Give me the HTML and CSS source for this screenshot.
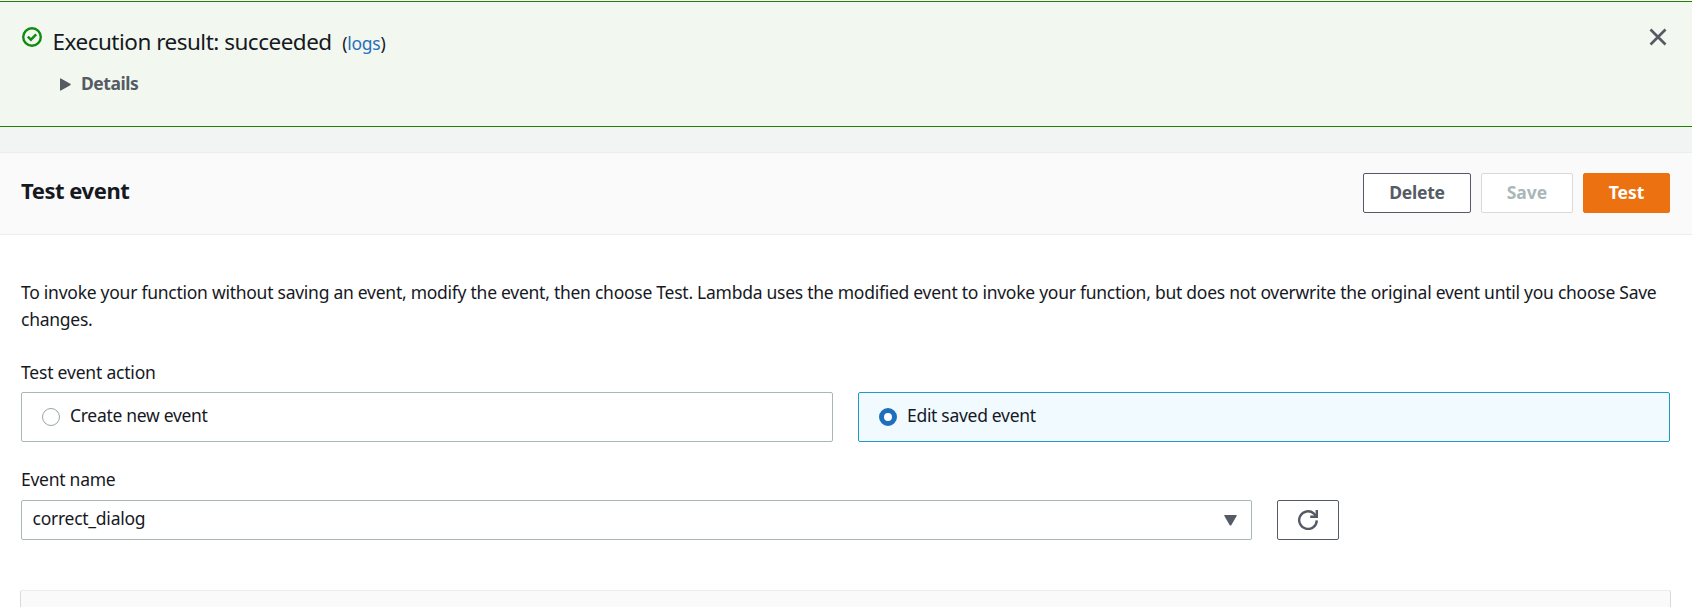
FILE: index.html
```html
<!DOCTYPE html>
<html lang="en">
<head>
<meta charset="utf-8">
<title>Test event</title>
<link rel="stylesheet" href="styles.css">
</head>
<body>
<section class="banner">
  <svg class="status-icon" viewBox="0 0 20 20"><circle cx="10" cy="10" r="8.8"/><path d="M5.8 9.7l3.1 3 5.3-5.3"/></svg>
  <div class="banner-body">
    <div class="banner-title"><span class="result">Execution result: succeeded</span><span class="logs">(<a>logs</a>)</span></div>
    <div class="details"><svg class="caret" viewBox="0 0 11 13"><path d="M0 .9q0-.9.9-.5l9.4 5.4q.8.7 0 1.4L.9 12.6q-.9.4-.9-.5z"/></svg><span>Details</span></div>
  </div>
  <svg class="close" viewBox="0 0 18 18"><path d="M1.5 1.5l15 15M16.5 1.5l-15 15"/></svg>
</section>
<main class="panel">
  <header class="panel-header">
    <h2>Test event</h2>
    <div class="actions">
      <button class="btn delete"><span>Delete</span></button>
      <button class="btn save"><span>Save</span></button>
      <button class="btn test"><span>Test</span></button>
    </div>
  </header>
  <div class="panel-body">
    <p class="intro"><span>To invoke your function without saving an event, modify the event, then choose Test. Lambda uses the modified event to invoke your function, but does not overwrite the original event until you choose Save</span><br><span>changes.</span></p>
    <div class="label label-action"><span>Test event action</span></div>
    <div class="tiles">
      <div class="tile"><i class="radio"></i><span>Create new event</span></div>
      <div class="tile selected"><i class="radio"></i><span>Edit saved event</span></div>
    </div>
    <div class="label label-name"><span>Event name</span></div>
    <div class="name-row">
      <div class="select"><span>correct_dialog</span><svg class="arrow" viewBox="0 0 13 11"><path d="M.9 0h11.2q1.1.1.5 1L7.4 9.9q-.9 1-1.8 0L.4 1q-.6-.9.5-1z"/></svg></div>
      <button class="refresh" aria-label="Refresh"><svg viewBox="0 0 20 20"><path d="M18.8 10.4A8.8 8.8 0 1 1 15.8 3.5L18 5.8"/><path d="M18.8 0v6.8h-6.6"/></svg></button>
    </div>
    <div class="editor"></div>
  </div>
</main>
</body>
</html>
```
FILE: styles.css
```css
* { box-sizing: border-box; }
html { overflow: hidden; }
body { margin: 0; padding-top: 1px; height: 607px; overflow: hidden; background: #fff; color: #16191f; font: 17.5px/27px "Noto Sans", "Open Sans", sans-serif; letter-spacing: -0.26px; }
svg { display: block; flex: none; }
span { white-space: nowrap; }

.banner { height: 126px; display: flex; align-items: flex-start; padding: 26px 25px 0 22px; background: #f2f8f0; border-top: 1px solid #1d8102; border-bottom: 1px solid #1d8102; }
.status-icon { width: 20px; height: 20px; fill: none; stroke: #108a10; stroke-width: 2.4; margin-top: -1px; }
.banner-body { flex: 1; padding-left: 10.5px; }
.banner-title { display: flex; align-items: baseline; gap: 10.5px; height: 28px; }
.result { font-size: 22.5px; line-height: 28px; letter-spacing: -0.5px; }
.logs a { color: #2a6ebb; }
.details { display: flex; align-items: center; margin-top: 15px; padding-left: 7.5px; color: #545b64; font-weight: 700; line-height: 28px; letter-spacing: -0.45px; }
.details span { margin-top: -2px; }
.caret { width: 11px; height: 13px; margin-right: 10px; fill: #545b64; }
.close { width: 18px; height: 18px; fill: none; stroke: #545b64; stroke-width: 2.7; }

.panel { border-top: 25px solid #f2f3f3; }
.panel-header { height: 83px; display: flex; justify-content: space-between; align-items: flex-start; padding: 20px 22px 0 21px; background: #fafafa; border-top: 1px solid #eaeded; border-bottom: 1px solid #eaeded; }
h2 { margin: 3px 0 0; font-size: 22px; line-height: 28px; font-weight: 700; letter-spacing: -0.45px; }
.actions { display: flex; gap: 10px; }
.btn { height: 40px; padding: 0 0 2px; border: 1px solid #545b64; border-radius: 2px; background: #fff; color: #545b64; font: 700 17.5px/36px "Noto Sans", sans-serif; text-align: center; }
.delete { width: 108px; letter-spacing: -0.25px; }
.save { width: 92px; border-color: #d5dbdb; color: #aab7b8; }
.test { width: 87px; border-color: #ec7211; background: #ec7211; color: #fff; }

.panel-body { padding: 44px 22px 0 21px; }
.intro { margin: 0; }
.label { height: 27px; }
.label-action { margin-top: 26px; letter-spacing: -0.2px; }
.tiles { display: grid; grid-template-columns: 1fr 1fr; gap: 25px; margin: 6px 0 0; }
.tile { height: 50px; display: flex; align-items: center; padding: 0 0 2px 20px; border: 1px solid #aab7b8; border-radius: 2px; letter-spacing: -0.3px; }
.tile span { padding-bottom: 1px; }
.radio { width: 18px; height: 18px; margin: 2px 10px 0 0; border: 1px solid #98a5a6; border-radius: 50%; background: #fff; }
.selected { border-color: #1c9cc9; background: #f1faff; }
.selected .radio { border: 5px solid #1d70bc; }
.label-name { margin-top: 24px; }
.name-row { display: flex; gap: 25px; margin-top: 7px; }
.select { width: 1231px; height: 40px; display: flex; justify-content: space-between; align-items: center; padding: 0 14px 2px 10.5px; border: 1px solid #aab7b8; border-radius: 2px; }
.select span { padding-bottom: 1px; }
.arrow { width: 13px; height: 11px; fill: #545b64; margin-top: 2px; }
.refresh { width: 62px; height: 40px; display: grid; place-items: center; padding: 0; border: 1px solid #545b64; border-radius: 2px; background: #fff; }
.refresh svg { width: 20px; height: 20px; fill: none; stroke: #545b64; stroke-width: 2.4; }
.editor { height: 17px; margin: 50px -1px 0; background: #fafafa; border: 1px solid #d5dbdb; border-top-color: #eaeded; border-bottom: 0; border-radius: 2px 2px 0 0; }
```
